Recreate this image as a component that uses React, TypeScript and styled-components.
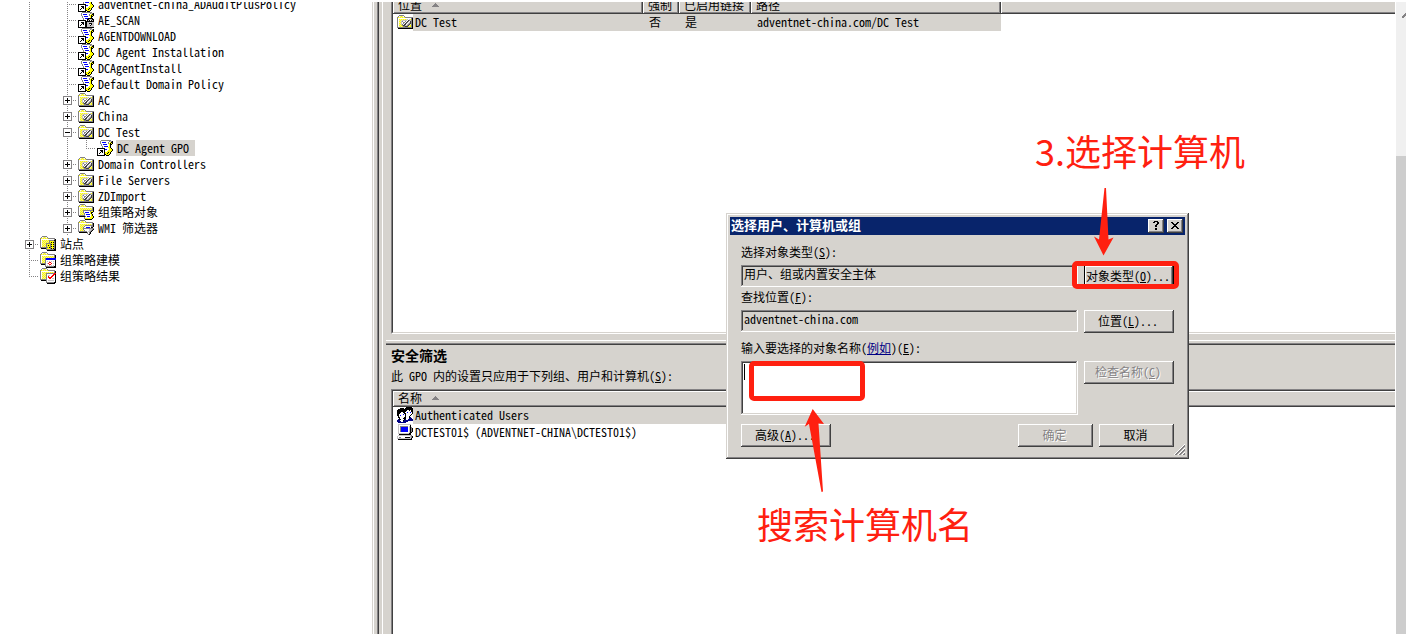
import React from "react";
import styled, { createGlobalStyle, css } from "styled-components";

const face = "#d6d3ce";
const dark = "#404040";
const mid = "#848284";
const red = "#ff2010";

const raised = css`
  box-shadow: inset -1px -1px ${dark}, inset 1px 1px #fff, inset -2px -2px ${mid};
`;
const sunken = css`
  box-shadow: inset -1px -1px #fff, inset 1px 1px ${mid}, inset -2px -2px ${face}, inset 2px 2px ${dark};
`;

const Global = createGlobalStyle`
  * { box-sizing: border-box; }
  body { margin: 0; background: #fff; overflow: hidden; }
  body, button, input, textarea, table {
    font-family: "Noto Sans Mono CJK SC", "Noto Sans CJK SC", sans-serif;
    font-size: 12px;
    line-height: 16px;
    color: #000;
  }
`;

const Screen = styled.main`
  display: flex;
  position: relative;
  height: 100vh;
  padding-top: 2px;
  overflow: hidden;
`;

/* ---------- pixel icons ---------- */

const palette: Record<string, string> = {
  g: "#848284", k: "#000000", w: "#ffffff", y: "#ffff00", b: "#0000ff",
  c: "#c6c3c6", n: "#000084", r: "#ff0000", d: "#404040", o: "#848200", l: "#efeb9c",
};

const art: Record<string, string[]> = {
  ou: [
    "................",
    "..ggggg.........",
    ".gwlylwg........",
    "gylylylygggggggg",
    "gwwwwwwwwwwwwwgk",
    "gwylylylylcwcygk",
    "gwlylcccccwdgcgk",
    "gwylcgwwgwdgwdgk",
    "gwlycwggwdgwcdgk",
    "gwylcwgwdgwcgdgk",
    "gwlycgwddwcgdlgk",
    "gwylygddccgdlygk",
    "gwlylyggdddylygk",
    "gggggggggggggggk",
    ".kkkkkkkkkkkkkkk",
    "................",
  ],
  link: [
    "....gggggggggg..",
    "...gwwwwwwwwgcgk",
    "...gwbbbbwwgwykk",
    "...gwwwwwwwgykyk",
    "....gwbbbbwwykk.",
    "....gwwwwwwwyk..",
    ".....gwbbbbwyk..",
    ".....gwwwwwyyk..",
    "kkkkkkkkwwwwyyk.",
    "kwwwwwwkbbwwyyyk",
    "kwwkkkwkwwwyyyyk",
    "kwwwkkwkwwyyyyk.",
    "kwwkwkwkyyykyk..",
    "kwkwwwwkyykyyk..",
    "kwwwwwwkkyyyk...",
    "kkkkkkkk.kkk....",
  ],
  linkLocked: [
    "....gggggggggg..",
    "...gwwwwwwwwgcgk",
    "...gwbbbbwwgwykk",
    "...gwwwwwwwgykyk",
    "....gwbbbbwwykk.",
    "....gwwwwwwwyk..",
    ".....gwbbbkkkkk.",
    ".....gwwwkkccckk",
    "kkkkkkkkwkck.kck",
    "kwwwwwwkkkkkkkkk",
    "kwwkkkwkkccccccc",
    "kwwwkkwkkcckkkcc",
    "kwwkwkwkkcccwkcc",
    "kwkwwwwkkccckccc",
    "kwwwwwwkkccccccc",
    "kkkkkkkkkkkkkkkk",
  ],
  gpoFolder: [
    "..ggggg.........",
    ".gwlylwg........",
    "gylylylyggggggg.",
    "gwwwwwwwwwwwwwgk",
    "gwylylylylylylgk",
    "gwlylylylylylygk",
    "gwylyggggggggggk",
    "gwlylgwwwwwwgyyk",
    "gwylygwbbbbwykk.",
    "gwlylygwwwwwyk..",
    "gwylylgwbbbbwyk.",
    "gggggggwwwwwwyk.",
    ".kkkkkkgwbbbwyyk",
    "......gwwwwwyyyk",
    "......gyyyyyyyk.",
    ".......kkkkkkk..",
  ],
  wmiFolder: [
    "..ggggg.........",
    ".gwlylwg........",
    "gylylylyggggggg.",
    "gwwwwwwwwwwwwwgk",
    "gwylylylylylylgk",
    "gwlylylggggggggk",
    "gwylylgwwwwwwggk",
    "gwlylgwwbbbbwkk.",
    "gwylyggggggggggg",
    "gwlylgwwwwwcccgk",
    "gwylylgwwwwccgk.",
    "gggggggggwccgk..",
    ".kkkkkkkkgwgk...",
    ".........gwgk...",
    "..........gk....",
    "................",
  ],
  siteFolder: [
    "..ggggg.........",
    ".gwlylwg........",
    "gylylylyggggggg.",
    "gwwwwwwwwwwwwwgk",
    "gwylylylygggggkk",
    "gwlylylylgyyyygk",
    "gwylylylygykykgk",
    "gwlylygggggyyygk",
    "gwylylgyyygkykgk",
    "gwlylygykygyyygk",
    "gwylylgyyygkykgk",
    "ggggggggykgyyygk",
    ".kkkkkgyyygkykgk",
    "......ggggggggkk",
    ".......kkkkkkkkk",
    "................",
  ],
  modelFolder: [
    "..ggggg.........",
    ".gwlylwg........",
    "gylylylyggggggg.",
    "gwwwwwwwwwwwwwgk",
    "gwylylylylylylgk",
    "gwlylylylylylygk",
    "gwylygbbbbbbbbbb",
    "gwlylgbbbbbbbbbb",
    "gwylygwwwwwwwwwk",
    "gwlylgwcwcwcwcwk",
    "gwylygwwwrrwwwwk",
    "ggggggwcrwwrwcwk",
    ".kkkkgwwwrrwwwwk",
    ".....gwcwcwcwcwk",
    ".....gggggggggkk",
    "......kkkkkkkkkk",
  ],
  resultFolder: [
    "..ggggg.........",
    ".gwlylwg........",
    "gylylylyggggggg.",
    "gwwwwwwwwwwwwwgk",
    "gwylylylylylylgk",
    "gwlylyggggggggrr",
    "gwylylgwwwwwwrrk",
    "gwlylygwccwwrrwk",
    "gwylylgwrwwrrwwk",
    "gwlylygwrrrrwwwk",
    "gwylylgwwrrwccwk",
    "gggggggwwwwwwwwk",
    ".kkkkkgwccccccwk",
    "......gwwwwwwwwk",
    "......ggggggggkk",
    ".......kkkkkkkk.",
  ],
  users: [
    ".........kkkkkk.",
    "...kkkk.kkkkkkkk",
    ".kkkkkkkkkkkkkkk",
    "kkkkkkkkkkwwkwkk",
    "kkkkkkkkkwwwwwkk",
    "kkkkwwkkwwbwwbwk",
    "kkkwwwwkkwwwwwwk",
    "kkwwwwbwkwwwwwk.",
    "kkwbwwwwkwwwwk..",
    ".kwwwwwwkwwwk...",
    ".kkwwwwkkwwwkn..",
    "..kwwwkkkwwwnnn.",
    ".nkkwwwknwwnnnnn",
    "nnnwwwknnnnnnnnn",
    "nnnnwwnnnnn.....",
    ".nnnnnnnn.......",
  ],
  computer: [
    ".ccccccccccccc..",
    ".cwwwwwwwwwwwk..",
    ".cwggggggggwck..",
    ".cwgbbbbbbbwckg.",
    ".cwgbbbbbbbwckgk",
    ".cwgbbbbbbbwckgk",
    ".cwgbbbbbbbwckgk",
    ".cwgbbbbbbbwckgk",
    ".cwwwwwwwwwwckk.",
    ".ccccccccccckk..",
    "..kkkkkkkkkkkk..",
    ".cccccccccccccg.",
    "cwwwwwwwwwwwwcgk",
    "cwggwwwwkkkkkcgk",
    "cccccccccccccck.",
    ".kkkkkkkkkkkkkk.",
  ],
  grip: [
    "..........w",
    ".........wg",
    "........wgg",
    ".......wgg.",
    "......wgg.w",
    ".....wgg.wg",
    "....wgg.wgg",
    "...wgg.wgg.",
    "..wgg.wgg.w",
    ".wgg.wgg.wg",
    "wgg.wgg.wgg",
  ],
  close: [
    "kk....kk",
    ".kk..kk.",
    "..kkkk..",
    "...kk...",
    "..kkkk..",
    ".kk..kk.",
    "kk....kk",
  ],
  help: [
    ".kkkk.",
    "kk..kk",
    "....kk",
    "...kk.",
    "..kk..",
    "..kk..",
    "......",
    "..kk..",
    "..kk..",
  ],
  sort: ["...g...", "..ggg..", ".ggggg.", "ggggggg"],
  scrollUp: ["...g", "..gg", ".ggg", "ggg.", "gg.."],
};

const Svg = styled.svg`
  display: block;
  flex: none;
`;

function PixelIcon({ name }: { name: string }) {
  const rows = art[name];
  const cells: React.ReactNode[] = [];
  rows.forEach((row, y) => {
    let x = 0;
    while (x < row.length) {
      const start = x;
      while (x < row.length && row[x] === row[start]) x++;
      if (row[start] !== ".") {
        cells.push(<rect key={`${start}-${y}`} x={start} y={y} width={x - start} height={1} fill={palette[row[start]]} />);
      }
    }
  });
  return (
    <Svg width={rows[0].length} height={rows.length} shapeRendering="crispEdges" aria-hidden="true">
      {cells}
    </Svg>
  );
}

/* ---------- tree ---------- */

const TreePane = styled.nav`
  flex: none;
  width: 372px;
  overflow: hidden;
`;

const TreeList = styled.ul`
  list-style: none;
  margin: -6px 0 0;
  padding: 0 0 0 20px;
`;

const TreeRow = styled.li`
  display: flex;
  align-items: center;
  height: 16px;
  white-space: nowrap;
`;

const TreeIcon = styled.span`
  margin: 0 3px 0 1px;
`;

const TreeLabel = styled.span<{ $selected?: boolean }>`
  padding: 0 6px 0 1px;
  background: ${(p) => (p.$selected ? face : "transparent")};
`;

type GuideKind = " " | "|" | "t" | "L" | "+" | "-";

function Guide({ kind }: { kind: GuideKind }) {
  const vertical = kind !== " ";
  const horizontal = kind !== " " && kind !== "|";
  const box = kind === "+" || kind === "-";
  return (
    <Svg width="19" height="16" shapeRendering="crispEdges" aria-hidden="true">
      {vertical && <path d={kind === "L" ? "M9.5 0V9" : "M9.5 0V16"} stroke={mid} strokeDasharray="1 1" />}
      {horizontal && <path d="M9 8.5H19" stroke={mid} strokeDasharray="1 1" />}
      {box && <rect x="5.5" y="4.5" width="8" height="8" fill="#fff" stroke={mid} />}
      {box && <path d="M7 8.5H12" stroke="#000" />}
      {kind === "+" && <path d="M9.5 6V11" stroke="#000" />}
    </Svg>
  );
}

const tree: { guides: string; icon: string; label: string; selected?: boolean }[] = [
  { guides: "| t", icon: "link", label: "adventnet-china_ADAuditPlusPolicy" },
  { guides: "| t", icon: "linkLocked", label: "AE_SCAN" },
  { guides: "| t", icon: "link", label: "AGENTDOWNLOAD" },
  { guides: "| t", icon: "link", label: "DC Agent Installation" },
  { guides: "| t", icon: "link", label: "DCAgentInstall" },
  { guides: "| t", icon: "link", label: "Default Domain Policy" },
  { guides: "| +", icon: "ou", label: "AC" },
  { guides: "| +", icon: "ou", label: "China" },
  { guides: "| -", icon: "ou", label: "DC Test" },
  { guides: "| |L", icon: "link", label: "DC Agent GPO", selected: true },
  { guides: "| +", icon: "ou", label: "Domain Controllers" },
  { guides: "| +", icon: "ou", label: "File Servers" },
  { guides: "| +", icon: "ou", label: "ZDImport" },
  { guides: "| +", icon: "gpoFolder", label: "组策略对象" },
  { guides: "| +", icon: "wmiFolder", label: "WMI 筛选器" },
  { guides: "+", icon: "siteFolder", label: "站点" },
  { guides: "t", icon: "modelFolder", label: "组策略建模" },
  { guides: "L", icon: "resultFolder", label: "组策略结果" },
];

/* ---------- detail panes ---------- */

const Splitter = styled.div`
  flex: none;
  width: 11px;
  background: ${face};
  border-left: 1px solid ${face};
  box-shadow: inset 1px 0 #fff, inset -1px 0 #fff;
  display: flex;
  justify-content: center;
`;

const SplitterEdge = styled.div`
  width: 2px;
  background: ${dark};
  border-left: 1px solid ${mid};
`;

const Details = styled.section`
  flex: 1;
  min-width: 0;
  display: flex;
  flex-direction: column;
  background: ${face};
  border-right: 1px solid #fff;
`;

const ListBox = styled.div<{ $top?: boolean }>`
  display: flex;
  flex: ${(p) => (p.$top ? "0 0 332px" : "1")};
  margin: ${(p) => (p.$top ? "0" : "5px")} 0 0 8px;
  border-left: 1px solid ${mid};
  border-top: ${(p) => (p.$top ? "0" : `1px solid ${mid}`)};
  border-bottom: ${(p) => (p.$top ? "1px solid #fff" : "0")};
  overflow: hidden;
`;

const ListFace = styled.div<{ $top?: boolean }>`
  flex: 1;
  min-width: 0;
  background: #fff;
  border-left: 1px solid ${dark};
  border-top: ${(p) => (p.$top ? "0" : `1px solid ${dark}`)};
  border-bottom: ${(p) => (p.$top ? `1px solid ${face}` : "0")};
`;

const Table = styled.table<{ $clipped?: boolean }>`
  width: 100%;
  margin-top: ${(p) => (p.$clipped ? "-4px" : "0")};
  table-layout: fixed;
  border-collapse: collapse;
`;

const Th = styled.th`
  height: 16px;
  padding: 0 0 2px 5px;
  background: ${face};
  ${raised}
  font-weight: normal;
  line-height: 14px;
  text-align: left;
  white-space: nowrap;
  &:last-child {
    box-shadow: inset 0 -1px ${dark}, inset 1px 1px #fff, inset 0 -2px ${mid};
  }
`;

const HeadLabel = styled.span`
  display: flex;
  align-items: center;
  gap: 10px;
`;

const Td = styled.td<{ $selected?: boolean }>`
  height: 17px;
  padding: 0 0 2px 6px;
  line-height: 15px;
  background: ${(p) => (p.$selected ? face : "#fff")};
  white-space: nowrap;
`;

const LeadTd = styled(Td)`
  padding: 0;
`;

const Lead = styled.span`
  display: flex;
  gap: 2px;
`;

const LeadIcon = styled.span`
  width: 20px;
  height: 17px;
  padding-left: 4px;
  background: #fff;
`;

const Divider = styled.div`
  height: 5px;
  margin: 6px 0 0 3px;
  border-top: 1px solid #fff;
  border-bottom: 1px solid ${dark};
  box-shadow: inset 0 -1px ${mid};
`;

const SectionTitle = styled.h2`
  margin: 1px 0 0 8px;
  font-size: 14px;
  line-height: 18px;
`;

const SectionNote = styled.p`
  margin: 4px 0 0 8px;
  line-height: 16px;
`;

const ScrollTrack = styled.div`
  flex: none;
  width: 10px;
  background: #f0f0f0;
  display: flex;
  flex-direction: column;
`;

const ScrollCap = styled.div`
  height: 154px;
  padding: 11px 0 0 6px;
`;

const ScrollThumb = styled.div`
  flex: 1;
  background: #cdcdcd;
`;

/* ---------- dialog ---------- */

const DialogBox = styled.div`
  position: absolute;
  left: 726px;
  top: 213px;
  width: 463px;
  padding: 4px;
  background: ${face};
  box-shadow: inset -1px -1px ${dark}, inset 1px 1px ${face}, inset -2px -2px ${mid}, inset 2px 2px #fff;
`;

const TitleBar = styled.header`
  display: flex;
  align-items: center;
  gap: 3px;
  height: 18px;
  padding: 0 2px 0 1px;
  background: #08246b;
`;

const DialogTitle = styled.h1`
  flex: 1;
  margin: 0;
  padding-bottom: 2px;
  color: #fff;
  font-size: 13px;
  line-height: 16px;
`;

const CaptionButton = styled.button`
  display: flex;
  align-items: center;
  justify-content: center;
  width: 16px;
  height: 14px;
  padding: 0 1px 1px 0;
  border: 0;
  background: ${face};
  ${raised}
`;

const Form = styled.form`
  padding: 8px 11px;
`;

const Group = styled.div<{ $gap?: number }>`
  margin-top: ${(p) => p.$gap ?? 0}px;
`;

const Caption = styled.label`
  display: block;
  padding-bottom: 4px;
  line-height: 18px;
`;

const FieldRow = styled.div`
  display: grid;
  grid-template-columns: 1fr 90px;
  gap: 6px;
  align-items: start;
`;

const Field = styled.input`
  width: 100%;
  height: 22px;
  padding: 0 3px 5px;
  border: 0;
  background: ${face};
  ${sunken}
`;

const NamesBox = styled.div`
  position: relative;
  height: 54px;
`;

const Names = styled.textarea`
  display: block;
  width: 100%;
  height: 100%;
  padding: 2px 3px;
  border: 0;
  resize: none;
  background: #fff;
  ${sunken}
`;

const TextCursor = styled.span`
  position: absolute;
  left: 3px;
  top: 3px;
  width: 1px;
  height: 16px;
  background: #000;
`;

const Button = styled.button<{ $width?: number; $focus?: boolean }>`
  width: ${(p) => p.$width ?? 90}px;
  height: 23px;
  padding: 0 2px 2px 0;
  border: ${(p) => (p.$focus ? "1px solid #000" : "0")};
  background: ${face};
  ${raised}
  white-space: nowrap;
  &:disabled {
    color: ${mid};
    text-shadow: 1px 1px #fff;
  }
`;

const Footer = styled.div`
  display: flex;
  gap: 6px;
  margin-top: 9px;
`;

const Spacer = styled.span`
  flex: 1;
`;

const Example = styled.a`
  color: #000084;
`;

const Grip = styled.span`
  position: absolute;
  right: 4px;
  bottom: 4px;
`;

/* ---------- annotations ---------- */

const Highlight = styled.div<{ $x: number; $y: number; $w: number; $h: number }>`
  position: absolute;
  left: ${(p) => p.$x}px;
  top: ${(p) => p.$y}px;
  width: ${(p) => p.$w}px;
  height: ${(p) => p.$h}px;
  border: 5px solid ${red};
  border-radius: 5px;
  pointer-events: none;
`;

const Note = styled.p<{ $x: number; $y: number }>`
  position: absolute;
  left: ${(p) => p.$x}px;
  top: ${(p) => p.$y}px;
  margin: 0;
  color: ${red};
  font-family: "Noto Sans CJK SC", sans-serif;
  font-size: 36px;
  line-height: 44px;
  white-space: nowrap;
`;

const Arrows = styled.svg`
  position: absolute;
  left: 0;
  top: 0;
  width: 100%;
  height: 100%;
  pointer-events: none;
`;

export default function App() {
  return (
    <Screen>
      <Global />
      <TreePane aria-label="组策略">
        <TreeList>
          {tree.map((row) => (
            <TreeRow key={row.label}>
              {row.guides.split("").map((kind, i) => (
                <Guide key={i} kind={kind as GuideKind} />
              ))}
              <TreeIcon>
                <PixelIcon name={row.icon} />
              </TreeIcon>
              <TreeLabel $selected={row.selected}>{row.label}</TreeLabel>
            </TreeRow>
          ))}
        </TreeList>
      </TreePane>
      <Splitter>
        <SplitterEdge />
      </Splitter>
      <Details>
        <ListBox $top>
          <ListFace $top>
            <Table $clipped>
              <colgroup>
                <col width="250" />
                <col width="36" />
                <col width="72" />
                <col width="250" />
                <col />
              </colgroup>
              <thead>
                <tr>
                  <Th><HeadLabel>位置<PixelIcon name="sort" /></HeadLabel></Th>
                  <Th>强制</Th>
                  <Th>已启用链接</Th>
                  <Th>路径</Th>
                  <Th />
                </tr>
              </thead>
              <tbody>
                <tr>
                  <LeadTd $selected>
                    <Lead><LeadIcon><PixelIcon name="ou" /></LeadIcon>DC Test</Lead>
                  </LeadTd>
                  <Td $selected>否</Td>
                  <Td $selected>是</Td>
                  <Td $selected>adventnet-china.com/DC Test</Td>
                  <Td />
                </tr>
              </tbody>
            </Table>
          </ListFace>
        </ListBox>
        <Divider />
        <SectionTitle>安全筛选</SectionTitle>
        <SectionNote>此 GPO 内的设置只应用于下列组、用户和计算机(<u>S</u>):</SectionNote>
        <ListBox>
          <ListFace>
            <Table>
              <colgroup>
                <col width="500" />
                <col />
              </colgroup>
              <thead>
                <tr>
                  <Th><HeadLabel>名称<PixelIcon name="sort" /></HeadLabel></Th>
                  <Th />
                </tr>
              </thead>
              <tbody>
                <tr>
                  <LeadTd $selected>
                    <Lead><LeadIcon><PixelIcon name="users" /></LeadIcon>Authenticated Users</Lead>
                  </LeadTd>
                  <Td />
                </tr>
                <tr>
                  <LeadTd>
                    <Lead><LeadIcon><PixelIcon name="computer" /></LeadIcon>DCTEST01$ (ADVENTNET-CHINA\DCTEST01$)</Lead>
                  </LeadTd>
                  <Td />
                </tr>
              </tbody>
            </Table>
          </ListFace>
        </ListBox>
      </Details>
      <ScrollTrack>
        <ScrollCap><PixelIcon name="scrollUp" /></ScrollCap>
        <ScrollThumb />
      </ScrollTrack>

      <DialogBox role="dialog" aria-labelledby="dialog-title">
        <TitleBar>
          <DialogTitle id="dialog-title">选择用户、计算机或组</DialogTitle>
          <CaptionButton aria-label="帮助"><PixelIcon name="help" /></CaptionButton>
          <CaptionButton aria-label="关闭"><PixelIcon name="close" /></CaptionButton>
        </TitleBar>
        <Form onSubmit={(e) => e.preventDefault()}>
          <Group>
            <Caption htmlFor="types">选择对象类型(<u>S</u>):</Caption>
            <FieldRow>
              <Field id="types" readOnly value="用户、组或内置安全主体" />
              <Button type="button" $focus>对象类型(<u>O</u>)...</Button>
            </FieldRow>
          </Group>
          <Group>
            <Caption htmlFor="place">查找位置(<u>F</u>):</Caption>
            <FieldRow>
              <Field id="place" readOnly value="adventnet-china.com" />
              <Button type="button">位置(<u>L</u>)...</Button>
            </FieldRow>
          </Group>
          <Group $gap={6}>
            <Caption htmlFor="names">输入要选择的对象名称(<Example href="#example">例如</Example>)(<u>E</u>):</Caption>
            <FieldRow>
              <NamesBox>
                <Names id="names" />
                <TextCursor />
              </NamesBox>
              <Button type="button" disabled>检查名称(<u>C</u>)</Button>
            </FieldRow>
          </Group>
          <Footer>
            <Button type="button">高级(<u>A</u>)...</Button>
            <Spacer />
            <Button type="submit" $width={75} disabled>确定</Button>
            <Button type="button" $width={75}>取消</Button>
          </Footer>
        </Form>
        <Grip><PixelIcon name="grip" /></Grip>
      </DialogBox>

      <Highlight $x={1072} $y={261} $w={107} $h={28} />
      <Highlight $x={749} $y={361} $w={116} $h={40} />
      <Arrows aria-hidden="true">
        <path fill={red} d="M1104.5 188H1106L1108.5 239.5L1113.5 237.5L1103.5 255.5L1094 236.5L1099 239.5Z" />
        <path fill={red} d="M812.7 409L824 424L818.5 423.5L823 491.5L821.5 492L809 424L804.7 426.7Z" />
      </Arrows>
      <Note $x={1035} $y={128}>3.选择计算机</Note>
      <Note $x={757} $y={501}>搜索计算机名</Note>
    </Screen>
  );
}
